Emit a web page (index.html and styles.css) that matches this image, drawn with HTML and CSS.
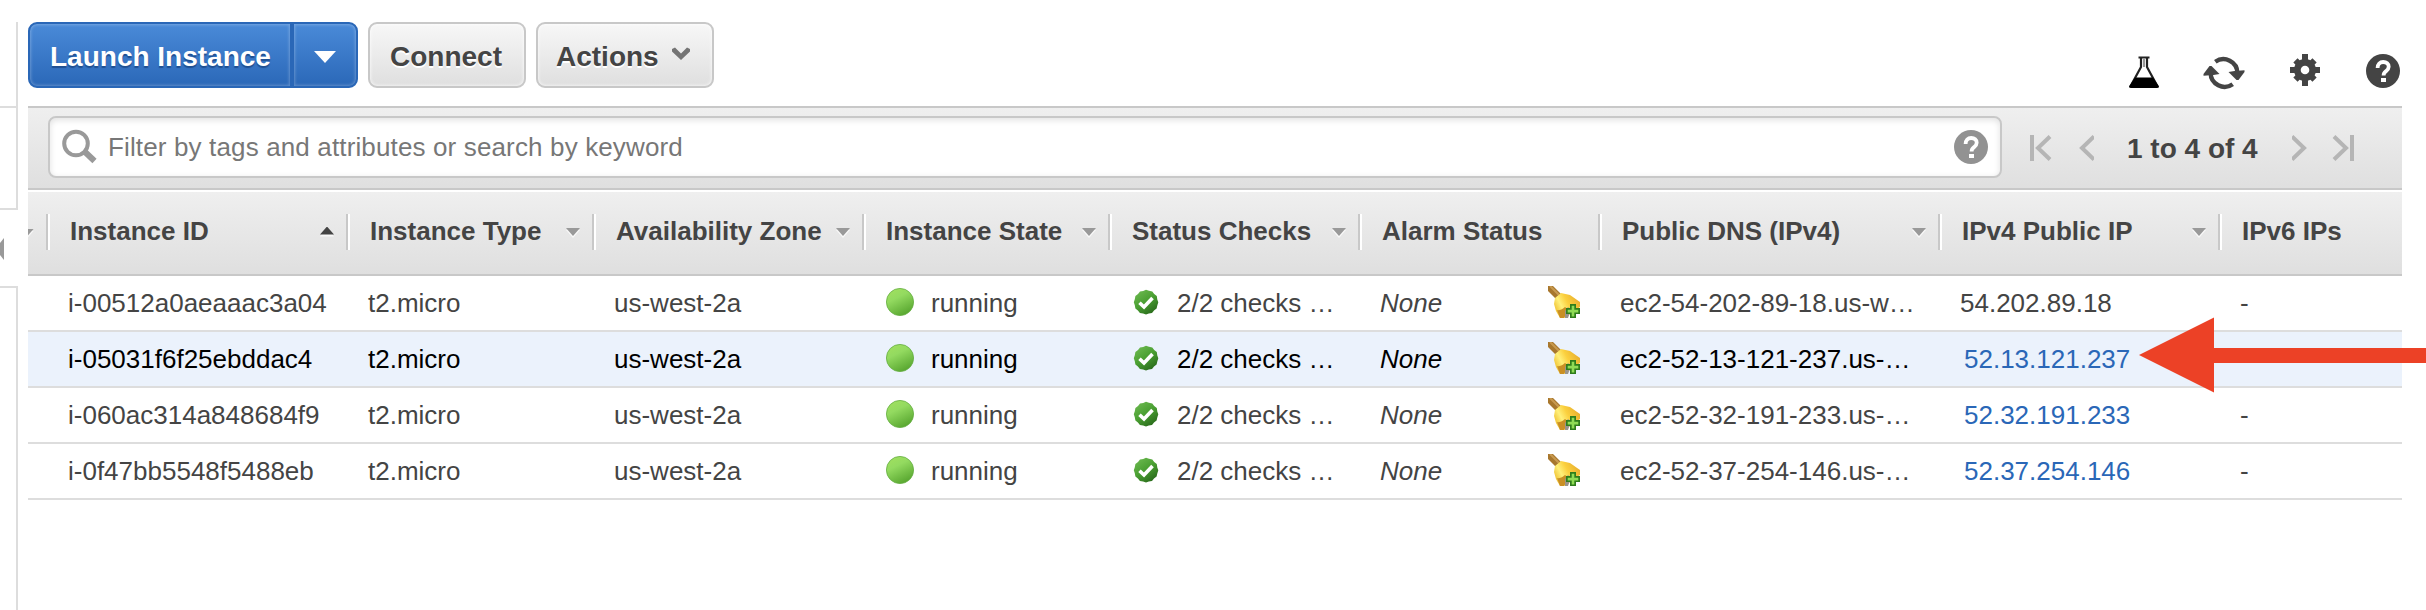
FILE: index.html
```html
<!DOCTYPE html>
<html lang="en">
<head>
<meta charset="utf-8">
<title>Instances</title>
<link rel="stylesheet" href="styles.css">
</head>
<body>
<svg class="defs" width="0" height="0">
  <defs>
    <linearGradient id="ball" x1="0.2" y1="0" x2="0.7" y2="1"><stop offset="0" stop-color="#a0e05f"/><stop offset="0.35" stop-color="#93da60"/><stop offset="1" stop-color="#55a42d"/></linearGradient>
    <linearGradient id="ok" x1="0.1" y1="0" x2="0.8" y2="1"><stop offset="0" stop-color="#6fbb52"/><stop offset="0.5" stop-color="#4a9f32"/><stop offset="1" stop-color="#266619"/></linearGradient>
    <linearGradient id="brass" x1="0" y1="0.7" x2="1" y2="0.2"><stop offset="0" stop-color="#eebb28"/><stop offset="0.3" stop-color="#fff07a"/><stop offset="0.55" stop-color="#fbd03e"/><stop offset="1" stop-color="#e5aa2c"/></linearGradient>
    <symbol id="i-run" viewBox="0 0 28 28"><circle cx="14" cy="14" r="13.6" fill="url(#ball)" stroke="#63ad40" stroke-width=".8"/></symbol>
    <symbol id="i-ok" viewBox="0 0 26 26"><path d="M13 .8l3 1 3.3.6 1.9 2.7 2.6 2 .5 3.3 1 2.9-1 3.1-.7 3.1-2.6 2-2 2.500-3.200.6L13 25.400l-2.900-.9-3.200-.5-2-2.600-2.500-2-.6-3.200-1-2.900 1-3.100.6-3.100 2.600-2 2-2.500 3.200-.6z" fill="url(#ok)"/><path d="M6.500 13.800l4.500 4.200 8.500-9" fill="none" stroke="#fff" stroke-width="3.600"/></symbol>
    <symbol id="i-bell" viewBox="0 0 32 32"><path d="M0 0h5l8 8-5 5-8-8z" fill="#a8772d"/><path d="M2 0l9 9" stroke="#c89a50" stroke-width="2"/><path d="M7 12l6-5 9 2 10 7v5L17 32h-5l-4-7-2-7z" fill="url(#brass)"/><path d="M9 24q3 1 8-3l4 3-5 8h-4z" fill="#c98f25"/><path d="M17 25l3-4 3 3-3 8h-3z" fill="#9a948c"/><path d="M22 18h6v4h4v6h-4v4h-6v-4h-4v-6h4z" fill="#2f7d1c"/><path d="M23.700 19.800h2.600v4h4v2.600h-4v4h-2.600v-4h-4v-2.600h4z" fill="#8fdc55"/></symbol>
    <symbol id="i-help" viewBox="0 0 34 34"><circle cx="17" cy="17" r="17" fill="currentColor"/><path d="M11.600 14c0-4 2.300-6 5.600-6s5.500 1.900 5.500 4.700c0 2.500-1.400 3.500-2.900 4.700-1.600 1.100-2.200 1.900-2.200 4.100" fill="none" stroke="var(--mark)" stroke-width="3.800"/><rect x="15" y="24" width="5" height="4" fill="var(--mark)"/></symbol>
  </defs>
</svg>
<div class="page">
  <aside class="side">
    <div class="pane pane-top"></div>
    <div class="pane pane-mid"></div>
    <div class="handle"><svg width="4" height="22"><path d="M4 0v22L0 17V5z" fill="#999"/></svg></div>
    <div class="pane pane-low"></div>
  </aside>
  <main class="main">
    <header class="actions">
      <div class="split">
        <button class="btn primary launch">Launch Instance</button>
        <button class="btn primary drop"><svg width="22" height="12"><path d="M0 0h22L11 12z" fill="#fff"/></svg></button>
      </div>
      <button class="btn connect">Connect</button>
      <button class="btn menu">Actions<svg width="20" height="14"><path d="M1 2l3-1.500 6 6 6-6L19 2v2.500L10 13 1 4.500z" fill="#747474"/></svg></button>
      <div class="tools">
        <svg class="flask" width="30" height="32" viewBox="0 0 30 32"><path d="M9.500 1.500h11M12 2v9L2 29.500h26L18 11V2" fill="none" stroke="#222" stroke-width="2.200"/><path d="M15 3v8" stroke="#999" stroke-width="2"/><path d="M6 21.500h18L30 30.500q0 1.500-2 1.500H2q-2 0-2-1.500z" fill="#000"/></svg>
        <svg class="refresh" width="42" height="34" viewBox="0 0 42 34"><g id="half"><path d="M12.300 5.800A14 14 0 0 1 34.400 17" fill="none" stroke="#444" stroke-width="4.400"/><path d="M25.500 16l6-1 10-.8v1.800L35.500 24h-2z" fill="#444"/></g><use href="#half" transform="rotate(180 21 17)"/></svg>
        <svg class="gear" width="30" height="32" viewBox="0 0 30 32"><g fill="#444"><circle cx="15" cy="16" r="11"/><path id="teeth" d="M12 0h6v32h-6zM0 13h30v6H0z"/><path d="M12 2.500h6v27h-6zM1.500 13h27v6h-27z" transform="rotate(45 15 16)"/></g><circle cx="15" cy="16" r="4.300" fill="#fff"/></svg>
        <svg class="help" width="34" height="34"><use href="#i-help"/></svg>
      </div>
    </header>
    <div class="filter">
      <div class="search">
        <svg width="36" height="36" viewBox="0 0 36 36"><circle cx="14" cy="14.500" r="11.800" fill="none" stroke="#999" stroke-width="4"/><path d="M22 22l10.500 10" stroke="#999" stroke-width="6"/></svg>
        <span class="hint">Filter by tags and attributes or search by keyword</span>
        <svg class="help" width="34" height="34"><use href="#i-help"/></svg>
      </div>
      <nav class="pager">
        <svg width="64" height="26" fill="none" stroke="#b5b5b5"><path d="M2 0v26" stroke-width="4"/><path d="M20 1.500L8 13l12 11.500M64 1.500L52 13l12 11.500" stroke-width="4"/></svg>
        <span class="range">1 to 4 of 4</span>
        <svg width="62" height="26" fill="none" stroke="#b5b5b5"><path d="M60 0v26" stroke-width="4"/><path d="M0 1.500L12 13 0 24.500M42 1.500L54 13 42 24.500" stroke-width="4"/></svg>
      </nav>
    </div>
    <div class="row head">
      <div class="lead"><i class="down"></i></div>
      <div>Instance ID<i class="up"></i></div>
      <div>Instance Type<i class="down"></i></div>
      <div>Availability Zone<i class="down"></i></div>
      <div>Instance State<i class="down"></i></div>
      <div>Status Checks<i class="down"></i></div>
      <div>Alarm Status</div>
      <div>Public DNS (IPv4)<i class="down"></i></div>
      <div>IPv4 Public IP<i class="down"></i></div>
      <div>IPv6 IPs</div>
    </div>
    <div class="row">
      <div></div><div>i-00512a0aeaaac3a04</div><div>t2.micro</div><div>us-west-2a</div>
      <div><svg class="run"><use href="#i-run"/></svg>running</div>
      <div><svg class="ok"><use href="#i-ok"/></svg>2/2 checks …</div>
      <div><em>None</em><svg class="bell"><use href="#i-bell"/></svg></div>
      <div>ec2-54-202-89-18.us-w…</div><div>54.202.89.18</div><div>-</div>
    </div>
    <div class="row selected">
      <div></div><div>i-05031f6f25ebddac4</div><div>t2.micro</div><div>us-west-2a</div>
      <div><svg class="run"><use href="#i-run"/></svg>running</div>
      <div><svg class="ok"><use href="#i-ok"/></svg>2/2 checks …</div>
      <div><em>None</em><svg class="bell"><use href="#i-bell"/></svg></div>
      <div>ec2-52-13-121-237.us-…</div><div><a>52.13.121.237</a></div><div></div>
    </div>
    <div class="row">
      <div></div><div>i-060ac314a848684f9</div><div>t2.micro</div><div>us-west-2a</div>
      <div><svg class="run"><use href="#i-run"/></svg>running</div>
      <div><svg class="ok"><use href="#i-ok"/></svg>2/2 checks …</div>
      <div><em>None</em><svg class="bell"><use href="#i-bell"/></svg></div>
      <div>ec2-52-32-191-233.us-…</div><div><a>52.32.191.233</a></div><div>-</div>
    </div>
    <div class="row">
      <div></div><div>i-0f47bb5548f5488eb</div><div>t2.micro</div><div>us-west-2a</div>
      <div><svg class="run"><use href="#i-run"/></svg>running</div>
      <div><svg class="ok"><use href="#i-ok"/></svg>2/2 checks …</div>
      <div><em>None</em><svg class="bell"><use href="#i-bell"/></svg></div>
      <div>ec2-52-37-254-146.us-…</div><div><a>52.37.254.146</a></div><div>-</div>
    </div>
  </main>
  <svg class="pointer" width="288" height="76"><path d="M1 38L76 .5V31h212v15H76v29.500z" fill="#ec4126"/></svg>
</div>
</body>
</html>
```
FILE: styles.css
```css
* { box-sizing: border-box; }
body {
  margin: 0;
  background: #fff;
  color: #444;
  font: 26px "Liberation Sans", Arial, sans-serif;
}
svg { display: block; flex: none; }
.defs { position: absolute; }
.page {
  position: relative;
  display: flex;
  height: 610px;
  overflow: hidden;
}

/* Left panel edge */
.side {
  width: 18px;
  margin-right: 10px;
  padding-top: 22px;
  display: flex;
  flex-direction: column;
}
.pane { border-right: 2px solid #ddd; }
.pane-top { height: 86px; border-bottom: 2px solid #ddd; }
.pane-mid { height: 102px; border-bottom: 2px solid #ddd; }
.handle { height: 76px; padding-top: 28px; }
.pane-low { flex: 1; border-top: 2px solid #ddd; }

.main { width: 2374px; }

/* Action bar */
.actions {
  display: flex;
  height: 106px;
  padding-top: 22px;
}
.btn {
  display: flex;
  align-items: center;
  height: 66px;
  margin: 0 10px 0 0;
  padding: 3px 0 0 20px;
  border: 2px solid #c8c8c8;
  border-radius: 9px;
  background: linear-gradient(#f7f7f7, #dfdfdf);
  box-shadow: inset 0 0 3px 1px rgba(255, 255, 255, .6);
  color: #444;
  font: bold 28px "Liberation Sans", Arial, sans-serif;
  text-shadow: 0 2px 0 #fff;
}
.split { display: flex; margin-right: 10px; }
.primary {
  margin: 0;
  border-color: #2a67b7;
  background: linear-gradient(#4a8ad8, #2b68b8);
  box-shadow: inset 0 0 3px 1px rgba(255, 255, 255, .25);
  color: #fff;
  text-shadow: 0 2px 1px #1f4f91;
}
.launch { width: 264px; border-radius: 9px 0 0 9px; }
.drop { width: 66px; padding: 4px 0 0 20px; border-radius: 0 9px 9px 0; }
.connect { width: 158px; }
.menu { width: 178px; margin: 0; padding-left: 18px; }
.menu svg { margin: -5px 0 0 12px; }
.tools {
  display: flex;
  margin: 32px 2px 0 auto;
}
.flask { margin: 2px 44px 0 0; }
.refresh { margin: 2px 45px 0 0; }
.gear { margin-right: 46px; }
.help { color: #444; --mark: #fff; }

/* Filter bar */
.filter {
  display: flex;
  align-items: center;
  height: 84px;
  padding: 0 48px 0 20px;
  border: solid #c8c8c8;
  border-width: 2px 0;
  background: linear-gradient(#efefef, #dfdfdf);
}
.search {
  display: flex;
  align-items: center;
  width: 1954px;
  height: 62px;
  margin-top: -2px;
  padding: 0 12px;
  border: 2px solid #c8c8c8;
  border-radius: 8px;
  background: #fff;
  box-shadow: inset 0 2px 6px rgba(0, 0, 0, .12);
}
.hint { margin: 0 auto 0 10px; color: #777; letter-spacing: .14px; }
.search .help { color: #929292; }
.pager { display: flex; align-items: center; margin-left: 28px; }
.range {
  width: 198px;
  padding: 1px 0 0 33px;
  font-weight: bold;
  font-size: 28px;
}

/* Instance table */
.row {
  display: grid;
  grid-template-columns: 18px 300px 246px 270px 246px 250px 240px 340px 280px 184px;
  height: 56px;
  border-bottom: 2px solid #ddd;
}
.row > div {
  display: flex;
  align-items: center;
  padding-left: 22px;
  white-space: nowrap;
  overflow: hidden;
}
.row > div:first-child { padding: 0; }
.selected { background: #ebf2fc; color: #000; }
.row a { margin-left: 4px; color: #2a67b7; }
.row .run { width: 28px; height: 28px; margin: -3px 17px 0 2px; }
.row .ok { width: 26px; height: 26px; margin: -3px 18px 0 3px; }
.row .bell { width: 32px; height: 32px; margin: -2px 18px 0 auto; }

.head {
  height: 86px;
  padding: 24px 0;
  border-top: 2px solid #fff;
  border-bottom-color: #c8c8c8;
  background: linear-gradient(#efefef, #dfdfdf);
  background-clip: padding-box;
  font-weight: bold;
}
.head > div {
  height: 36px;
  margin-top: -2px;
  padding: 0 12px 1px 21px;
  border-left: 2px solid #c8c8c8;
  box-shadow: inset 2px 0 #fff;
}
.head > div:not(:first-child) { padding-left: 22px; }
.head > .lead { border: 0; box-shadow: none; }
.head i {
  width: 14px;
  height: 8px;
  margin: 1px 0 0 auto;
  filter: drop-shadow(0 2px 0 #f8f8f8);
}
.head .up { margin-top: -2px; }
.head i::before { content: ""; display: block; height: 8px; }
.down::before { background: #999; clip-path: polygon(0 0, 100% 0, 50% 100%); }
.up::before { background: #444; clip-path: polygon(50% 0, 100% 100%, 0 100%); }
.head .lead i { margin-left: -8px; }

/* Callout arrow drawn over the table */
.pointer { position: absolute; left: 2138px; top: 317px; }
```
